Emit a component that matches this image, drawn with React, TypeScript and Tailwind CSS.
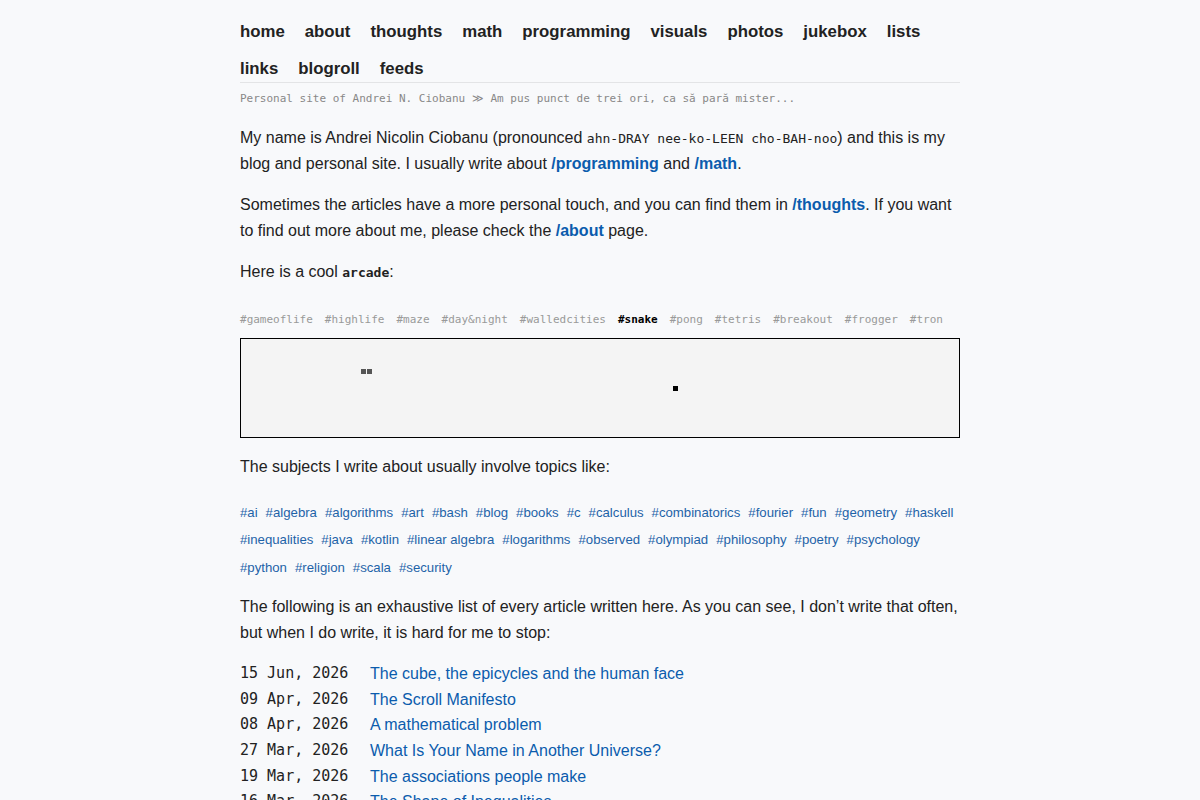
const nav = [
  'home', 'about', 'thoughts', 'math', 'programming', 'visuals',
  'photos', 'jukebox', 'lists', 'links', 'blogroll', 'feeds',
]

const games = [
  'gameoflife', 'highlife', 'maze', 'day&night', 'walledcities', 'snake',
  'pong', 'tetris', 'breakout', 'frogger', 'tron',
]

const topics = [
  'ai', 'algebra', 'algorithms', 'art', 'bash', 'blog', 'books', 'c', 'calculus',
  'combinatorics', 'fourier', 'fun', 'geometry', 'haskell', 'inequalities', 'java',
  'kotlin', 'linear algebra', 'logarithms', 'observed', 'olympiad', 'philosophy',
  'poetry', 'psychology', 'python', 'religion', 'scala', 'security',
]

const posts: [string, string][] = [
  ['15 Jun, 2026', 'The cube, the epicycles and the human face'],
  ['09 Apr, 2026', 'The Scroll Manifesto'],
  ['08 Apr, 2026', 'A mathematical problem'],
  ['27 Mar, 2026', 'What Is Your Name in Another Universe?'],
  ['19 Mar, 2026', 'The associations people make'],
  ['16 Mar, 2026', 'The Shape of Inequalities'],
  ['02 Mar, 2026', 'Notes on a quiet month'],
]

const mono = "font-['DejaVu_Sans_Mono',monospace]"

function Link({ children }: { children: React.ReactNode }) {
  return <a className="font-bold text-[#0b5cad] no-underline" href="#">{children}</a>
}

function Snake() {
  return (
    <div className="relative h-[100px] w-full border border-black bg-[#f4f4f4]">
      {/* snake body */}
      <div className="absolute left-[120px] top-[30px] h-[5px] w-[5px] bg-[#555]" />
      <div className="absolute left-[126px] top-[30px] h-[5px] w-[5px] bg-[#555]" />
      {/* food */}
      <div className="absolute left-[432px] top-[47px] h-[5px] w-[5px] bg-black" />
    </div>
  )
}

export default function App() {
  return (
    <div className="min-h-[800px] bg-[#f8f9fb] font-['Liberation_Sans',Arial,sans-serif] text-[16px] text-[#222]">
      <div className="mx-auto w-[720px] pt-[18px]">
        <nav className="flex flex-wrap gap-x-[20px] gap-y-[10px] border-b border-[#e3e4e6] text-[16.8px] font-bold leading-[27px] text-[#222]">
          {nav.map((n) => (
            <a key={n} href="#">{n}</a>
          ))}
        </nav>
        <div className={`${mono} mt-[8px] text-[11px] leading-[16px] text-[#888]`}>
          Personal site of Andrei N. Ciobanu ≫ Am pus punct de trei ori, ca să pară mister...
        </div>

        <p className="mt-[18px] leading-[25.6px]">
          My name is Andrei Nicolin Ciobanu (pronounced{' '}
          <code className={`${mono} text-[13px] leading-none`}>ahn-DRAY nee-ko-LEEN cho-BAH-noo</code>) and this is my
          blog and personal site. I usually write about <Link>/programming</Link> and <Link>/math</Link>.
        </p>
        <p className="mt-[16px] leading-[25.6px]">
          Sometimes the articles have a more personal touch, and you can find them in{' '}
          <Link>/thoughts</Link>. If you want to find out more about me, please check the{' '}
          <Link>/about</Link> page.
        </p>
        <p className="mt-[16px] leading-[25.6px]">
          Here is a cool <code className={`${mono} text-[13px] font-bold leading-none`}>arcade</code>:
        </p>

        <div className={`${mono} mt-[27px] flex flex-wrap gap-x-[12px] text-[11px] leading-[16px] text-[#999]`}>
          {games.map((g) => (
            <span key={g} className={g === 'snake' ? 'font-bold text-black' : ''}>#{g}</span>
          ))}
        </div>
        <div className="mt-[10px]">
          <Snake />
        </div>

        <p className="mt-[16px] leading-[25.6px]">The subjects I write about usually involve topics like:</p>

        <div className="mt-[19px] flex flex-wrap gap-x-[8px] text-[13.2px] leading-[27.5px] text-[#1e63a8]">
          {topics.map((t) => (
            <a key={t} href="#">#{t}</a>
          ))}
        </div>

        <p className="mt-[13px] leading-[25.6px]">
          The following is an exhaustive list of every article written here. As you can see, I don’t write that often,
          but when I do write, it is hard for me to stop:
        </p>

        <div className="mt-[16px]">
          {posts.map(([d, t]) => (
            <div key={d + t} className="flex leading-[25.6px]">
              <span className={`${mono} w-[130px] shrink-0 text-[15px] text-[#222]`}>{d}</span>
              <a href="#" className="text-[#0b5cad]">{t}</a>
            </div>
          ))}
        </div>
      </div>
    </div>
  )
}
